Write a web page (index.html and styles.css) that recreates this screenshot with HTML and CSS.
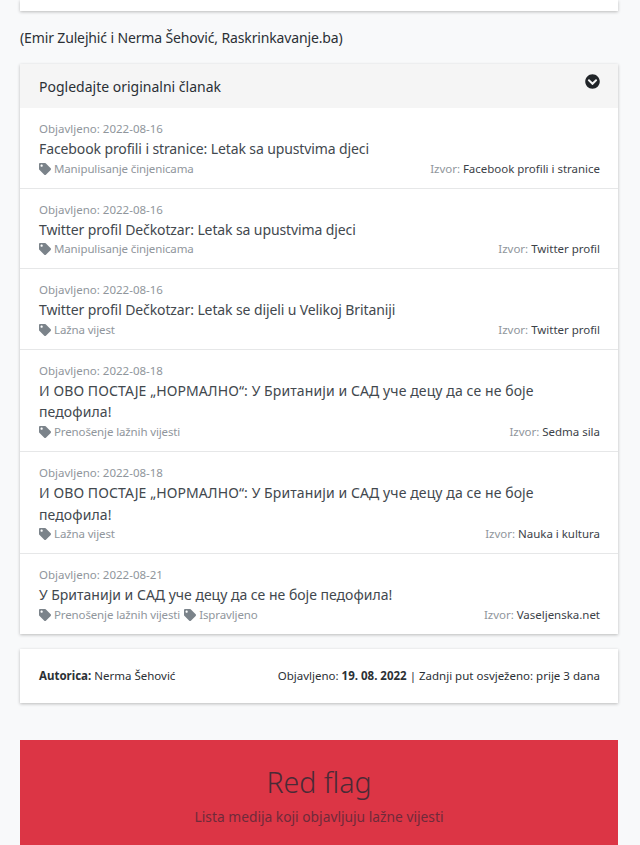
FILE: index.html
```html
<!DOCTYPE html>
<html lang="bs">
<head>
<meta charset="utf-8">
<title>Raskrinkavanje</title>
<link rel="stylesheet" href="styles.css">
</head>
<body>
<svg class="sprite" width="0" height="0">
  <symbol id="tag" viewBox="0 0 512 512">
    <path d="M0 252.100V48C0 21.500 21.500 0 48 0h204.100a48 48 0 0 1 33.900 14.100l211.900 211.900c18.700 18.700 18.700 49.100 0 67.900L293.800 497.900c-18.700 18.700-49.100 18.700-67.900 0L14.100 286.100A48 48 0 0 1 0 252.100zM112 64c-26.500 0-48 21.500-48 48s21.500 48 48 48 48-21.500 48-48-21.500-48-48-48z"/>
  </symbol>
</svg>
<main class="page">
  <div class="card stub"></div>
  <p class="credit">(Emir Zulejhić i Nerma Šehović, Raskrinkavanje.ba)</p>

  <section class="card sources">
    <header class="sources-head">
      <span>Pogledajte originalni članak</span>
      <svg class="chevron" viewBox="0 0 512 512"><path d="M504 256c0 137-111 248-248 248S8 393 8 256 119 8 256 8s248 111 248 248zM273 369.900l135.500-135.500c9.400-9.400 9.400-24.600 0-33.900l-17-17c-9.400-9.400-24.600-9.400-33.900 0L256 285.100 154.400 183.500c-9.400-9.400-24.600-9.400-33.900 0l-17 17c-9.400 9.400-9.400 24.600 0 33.900L239 369.900c9.400 9.400 24.600 9.400 34 0z"/></svg>
    </header>

    <article class="item">
      <div class="date">Objavljeno: 2022-08-16</div>
      <div class="title title-latin">Facebook profili i stranice: Letak sa upustvima djeci</div>
      <div class="meta">
        <div class="tags"><span class="tag"><svg class="tag-icon"><use href="#tag"/></svg>Manipulisanje činjenicama</span></div>
        <div class="source"><span class="muted">Izvor:</span> Facebook profili i stranice</div>
      </div>
    </article>

    <article class="item">
      <div class="date">Objavljeno: 2022-08-16</div>
      <div class="title title-latin">Twitter profil Dečkotzar: Letak sa upustvima djeci</div>
      <div class="meta">
        <div class="tags"><span class="tag"><svg class="tag-icon"><use href="#tag"/></svg>Manipulisanje činjenicama</span></div>
        <div class="source"><span class="muted">Izvor:</span> Twitter profil</div>
      </div>
    </article>

    <article class="item">
      <div class="date">Objavljeno: 2022-08-16</div>
      <div class="title title-latin">Twitter profil Dečkotzar: Letak se dijeli u Velikoj Britaniji</div>
      <div class="meta">
        <div class="tags"><span class="tag"><svg class="tag-icon"><use href="#tag"/></svg>Lažna vijest</span></div>
        <div class="source"><span class="muted">Izvor:</span> Twitter profil</div>
      </div>
    </article>

    <article class="item">
      <div class="date">Objavljeno: 2022-08-18</div>
      <div class="title title-caps">И ОВО ПОСТАЈЕ „НОРМАЛНО“: У Британији и САД уче децу да се не боје педофила!</div>
      <div class="meta">
        <div class="tags"><span class="tag"><svg class="tag-icon"><use href="#tag"/></svg>Prenošenje lažnih vijesti</span></div>
        <div class="source"><span class="muted">Izvor:</span> Sedma sila</div>
      </div>
    </article>

    <article class="item">
      <div class="date">Objavljeno: 2022-08-18</div>
      <div class="title title-caps">И ОВО ПОСТАЈЕ „НОРМАЛНО“: У Британији и САД уче децу да се не боје педофила!</div>
      <div class="meta">
        <div class="tags"><span class="tag"><svg class="tag-icon"><use href="#tag"/></svg>Lažna vijest</span></div>
        <div class="source"><span class="muted">Izvor:</span> Nauka i kultura</div>
      </div>
    </article>

    <article class="item">
      <div class="date">Objavljeno: 2022-08-21</div>
      <div class="title">У Британији и САД уче децу да се не боје педофила!</div>
      <div class="meta">
        <div class="tags"><span class="tag"><svg class="tag-icon"><use href="#tag"/></svg>Prenošenje lažnih vijesti</span><span class="tag"><svg class="tag-icon"><use href="#tag"/></svg>Ispravljeno</span></div>
        <div class="source"><span class="muted">Izvor:</span> Vaseljenska.net</div>
      </div>
    </article>
  </section>

  <section class="card byline">
    <div><strong>Autorica:</strong> Nerma Šehović</div>
    <div>Objavljeno: <strong>19. 08. 2022</strong> | Zadnji put osvježeno: prije 3 dana</div>
  </section>

  <section class="redflag">
    <h2>Red flag</h2>
    <p>Lista medija koji objavljuju lažne vijesti</p>
  </section>
</main>
</body>
</html>
```
FILE: styles.css
```css
* { box-sizing: border-box; }

html, body { height: 845px; overflow: hidden; }

body {
  margin: 0;
  background: #f8f9fa;
  color: #2b3035;
  font-family: "Noto Sans", "Open Sans", sans-serif;
}

.sprite { position: absolute; }

.page { padding: 0 22px 0 20px; }

.card {
  background: #fff;
  box-shadow: 0 1px 3px rgba(0, 0, 0, .25);
}

.stub { height: 11px; }

.credit {
  margin: 17px 0 0;
  height: 36px;
  font-size: 14px;
  line-height: 20px;
  letter-spacing: -.14px;
}

.sources-head {
  display: flex;
  justify-content: space-between;
  height: 44px;
  padding: 12px 18px 0 19px;
  background: #f5f5f5;
  font-size: 14px;
  line-height: 22px;
}

.chevron { width: 15px; height: 15px; margin-top: -2px; fill: #212529; }

.item {
  padding: 12px 18px 10px 19px;
  border-bottom: 1px solid #e6e7e8;
}
.item:last-child { border-bottom: 0; }

.date { font-size: 11.500px; line-height: 18px; color: #90969c; }
.title { font-size: 14px; line-height: 21.600px; color: #42484e; }
.title-latin { letter-spacing: -.11px; }
.title-caps { letter-spacing: .1px; }

.meta {
  display: flex;
  justify-content: space-between;
  font-size: 11.500px;
  line-height: 18px;
}
.tags { display: flex; gap: 4px; color: #90969c; letter-spacing: -.13px; }
.tag { display: flex; align-items: center; }
.tag-icon { width: 12px; height: 12px; fill: #7b838a; margin-right: 3px; }
.muted { color: #90969c; }
.source { color: #3c4248; letter-spacing: -.02px; }

.byline {
  display: flex;
  justify-content: space-between;
  align-items: center;
  height: 54px;
  margin-top: 15px;
  padding: 0 18px 0 19px;
  font-size: 11.500px;
}

.redflag {
  margin-top: 37px;
  height: 200px;
  padding-top: 24px;
  background: #dc3545;
  color: #4a2a36;
  text-align: center;
}
.redflag h2 { margin: 0; font-size: 28.500px; font-weight: 300; line-height: 36px; }
.redflag p { margin: 7px 0 0; font-size: 13.800px; line-height: 20px; color: #6f2a3a; }
```
